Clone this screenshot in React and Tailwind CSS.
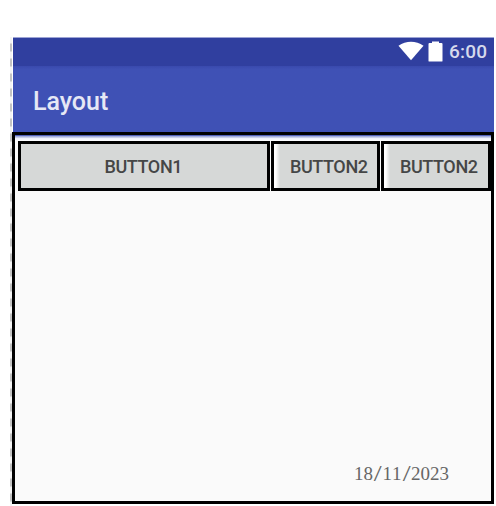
const GridButton = ({ label, className, textClass, lip }) => (
  <div className={`flex h-[50px] border-3 border-black bg-[#d6d8d7] ${className}`}>
    {lip && <div className="w-[6px] shrink-0 bg-linear-to-r from-white from-30% to-[#d6d8d7]" />}
    <span className={`mt-[11px] block h-6 whitespace-nowrap text-[18px] leading-6 font-medium tracking-[-0.4px] text-[#454646] ${textClass}`}>
      {label}
    </span>
  </div>
);

const DateText = () => (
  <div className="flex font-['Liberation_Serif',serif] text-[19px] leading-6 text-[#666]">
    {"18/11/2023".split("").map((c, i) => (
      <span key={i} className="flex w-[9.5px] justify-center">
        {c === "/" ? (
          <span className="inline-block origin-center scale-x-150 scale-y-120">{c}</span>
        ) : (
          c
        )}
      </span>
    ))}
  </div>
);

export default function App() {
  return (
    <div className="flex h-[506px] w-[496px] overflow-hidden bg-white pt-[37px] font-[Roboto,sans-serif]">
      <div className="ml-[10px] w-[2px] shrink-0 bg-[repeating-linear-gradient(to_bottom,#f4f4f4_0px,#f4f4f4_6px,#c4c4c4_7px,#c4c4c4_14px,#f4f4f4_15px)]" />
      <div className="flex w-[482px] flex-col">
        <div className="ml-px flex h-[29px] border-t border-[#9da4d5] bg-[#303f9f]">
          <svg className="mt-[3px] ml-[385px] shrink-0" width="26" height="20" viewBox="0 0 26 20">
            <path d="M.5 4.8C8-.5 18-.5 25.5 4.8L13 19.2Z" fill="#fff" />
          </svg>
          <svg className="mt-[3px] ml-[4px] shrink-0" width="15" height="21" viewBox="0 0 15 21">
            <path d="M4 2V.5h7V2h2.5q1 0 1 1v17q0 .5-1 .5h-12q-1 0-1-.5V3q0-1 1-1Z" fill="#fff" />
          </svg>
          <span className="mt-[2px] ml-[6px] text-[19px] leading-6 font-medium tracking-[0.2px] text-[#d6d9ec]">6:00</span>
        </div>
        <div className="ml-px h-[66px] bg-[#3f51b5] bg-linear-to-b from-[#3949ad] to-[#3f51b5] to-5% pt-[20px] pl-[20px]">
          <span className="block text-[25px] leading-8 font-medium text-[#e6e8f5]">Layout</span>
        </div>
        <div className="flex h-[372px] flex-col border-3 border-black bg-[#fafafa]">
          <div className="h-[6px] shrink-0 bg-[linear-gradient(#5262bb_0px,#5262bb_1px,#a4aedb_1px,#a4aedb_2px,#eceef9_3px,#fff_6px)]" />
          <div className="ml-[3px] flex gap-px">
            <GridButton label="BUTTON1" className="w-[252px]" textClass="ml-[83.5px]" />
            <GridButton label="BUTTON2" className="w-[109px]" textClass="ml-[10px]" lip />
            <GridButton label="BUTTON2" className="w-[110px]" textClass="ml-[10px]" lip />
          </div>
          <div className="mt-auto mr-[42px] mb-[15px] self-end">
            <DateText />
          </div>
        </div>
      </div>
    </div>
  );
}
